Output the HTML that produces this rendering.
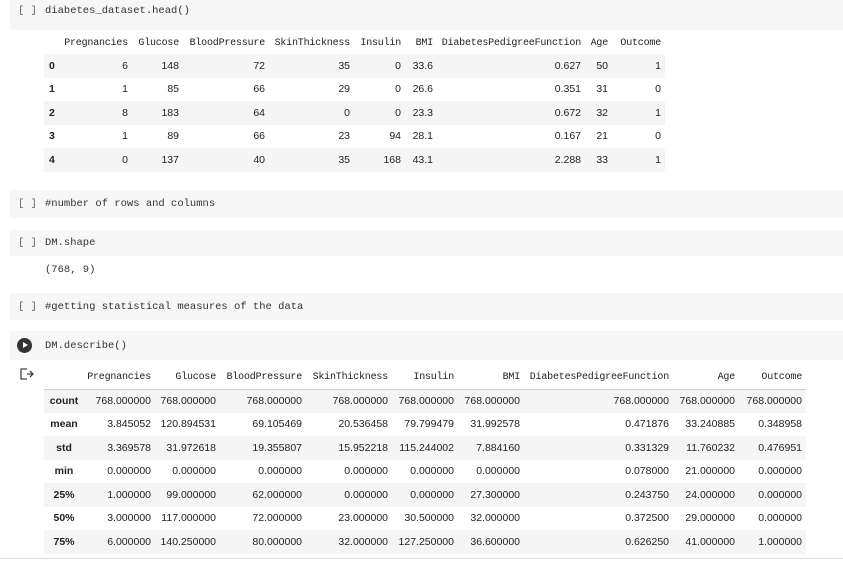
<!DOCTYPE html>
<html><head><meta charset="utf-8"><style>
body{margin:0;width:843px;height:567px;background:#fff;position:relative;overflow:hidden;font-family:"Liberation Sans",Arial,sans-serif;}
.cell{position:absolute;left:10px;right:0;background:#f7f7f7;}
.code{position:absolute;font-family:"Liberation Mono",monospace;font-size:10.5px;color:#333;white-space:pre;}
.br{position:absolute;left:18px;font-family:"Liberation Mono",monospace;font-size:10.5px;color:#666;}
table{position:absolute;border-collapse:collapse;table-layout:fixed;font-size:10.5px;color:#222;}
td,th{padding:0 4px 0 0;text-align:right;white-space:nowrap;overflow:hidden;}
th{font-family:"Liberation Mono",monospace;font-weight:normal;font-size:10px;color:#222;letter-spacing:-0.2px;}
td.i{font-weight:bold;text-align:left;padding-left:5px;}
tr.g td{background:#f5f5f5;}
#t1 tr{height:23.5px} #t1 tr.h{height:22px}
#t2 tr{height:23.5px} #t2 tr.h{height:22px} #t2 tr.h th{border-bottom:1px solid #ccc}
#t2 td.i{text-align:center;padding:0}
</style></head><body>
<div class="cell" style="top:0;height:30px"></div>
<span class="br" style="top:5px">[ ]</span><span class="code" style="left:45px;top:5px">diabetes_dataset.head()</span>

<table id="t1" style="left:44px;top:32px;width:621px">
<colgroup><col style="width:16px"><col style="width:72px"><col style="width:51px"><col style="width:86px"><col style="width:85px"><col style="width:51px"><col style="width:32px"><col style="width:148px"><col style="width:27px"><col style="width:53px"></colgroup>
<tr class="h"><th></th><th>Pregnancies</th><th>Glucose</th><th>BloodPressure</th><th>SkinThickness</th><th>Insulin</th><th>BMI</th><th>DiabetesPedigreeFunction</th><th>Age</th><th>Outcome</th></tr>
<tr class="g"><td class="i">0</td><td>6</td><td>148</td><td>72</td><td>35</td><td>0</td><td>33.6</td><td>0.627</td><td>50</td><td>1</td></tr>
<tr><td class="i">1</td><td>1</td><td>85</td><td>66</td><td>29</td><td>0</td><td>26.6</td><td>0.351</td><td>31</td><td>0</td></tr>
<tr class="g"><td class="i">2</td><td>8</td><td>183</td><td>64</td><td>0</td><td>0</td><td>23.3</td><td>0.672</td><td>32</td><td>1</td></tr>
<tr><td class="i">3</td><td>1</td><td>89</td><td>66</td><td>23</td><td>94</td><td>28.1</td><td>0.167</td><td>21</td><td>0</td></tr>
<tr class="g"><td class="i">4</td><td>0</td><td>137</td><td>40</td><td>35</td><td>168</td><td>43.1</td><td>2.288</td><td>33</td><td>1</td></tr>
</table>

<div class="cell" style="top:190px;height:28px"></div>
<span class="br" style="top:198px">[ ]</span><span class="code" style="left:45px;top:198px">#number of rows and columns</span>

<div class="cell" style="top:230px;height:26px"></div>
<span class="br" style="top:237px">[ ]</span><span class="code" style="left:45px;top:237px">DM.shape</span>
<span class="code" style="left:45px;top:264px">(768, 9)</span>

<div class="cell" style="top:293px;height:27px"></div>
<span class="br" style="top:301px">[ ]</span><span class="code" style="left:45px;top:301px">#getting statistical measures of the data</span>

<div class="cell" style="top:331px;height:29px"></div>
<div style="position:absolute;left:17px;top:338px;width:15px;height:15px;border-radius:50%;background:#333"></div>
<div style="position:absolute;left:23px;top:342px;width:0;height:0;border-left:5px solid #fff;border-top:3.5px solid transparent;border-bottom:3.5px solid transparent"></div>
<span class="code" style="left:45px;top:340px">DM.describe()</span>
<svg style="position:absolute;left:20px;top:368px" width="14" height="12" viewBox="0 0 14 12"><path d="M6 1H1v10h5M6 1h1M6 11h1M7 6h6M10 3l3 3-3 3" fill="none" stroke="#444" stroke-width="1.3"/></svg>

<table id="t2" style="left:44px;top:367px;width:762px">
<colgroup><col style="width:40px"><col style="width:71px"><col style="width:65px"><col style="width:86px"><col style="width:86px"><col style="width:66px"><col style="width:66px"><col style="width:149px"><col style="width:66px"><col style="width:67px"></colgroup>
<tr class="h"><th></th><th>Pregnancies</th><th>Glucose</th><th>BloodPressure</th><th>SkinThickness</th><th>Insulin</th><th>BMI</th><th>DiabetesPedigreeFunction</th><th>Age</th><th>Outcome</th></tr>
<tr class="g"><td class="i">count</td><td>768.000000</td><td>768.000000</td><td>768.000000</td><td>768.000000</td><td>768.000000</td><td>768.000000</td><td>768.000000</td><td>768.000000</td><td>768.000000</td></tr>
<tr><td class="i">mean</td><td>3.845052</td><td>120.894531</td><td>69.105469</td><td>20.536458</td><td>79.799479</td><td>31.992578</td><td>0.471876</td><td>33.240885</td><td>0.348958</td></tr>
<tr class="g"><td class="i">std</td><td>3.369578</td><td>31.972618</td><td>19.355807</td><td>15.952218</td><td>115.244002</td><td>7.884160</td><td>0.331329</td><td>11.760232</td><td>0.476951</td></tr>
<tr><td class="i">min</td><td>0.000000</td><td>0.000000</td><td>0.000000</td><td>0.000000</td><td>0.000000</td><td>0.000000</td><td>0.078000</td><td>21.000000</td><td>0.000000</td></tr>
<tr class="g"><td class="i">25%</td><td>1.000000</td><td>99.000000</td><td>62.000000</td><td>0.000000</td><td>0.000000</td><td>27.300000</td><td>0.243750</td><td>24.000000</td><td>0.000000</td></tr>
<tr><td class="i">50%</td><td>3.000000</td><td>117.000000</td><td>72.000000</td><td>23.000000</td><td>30.500000</td><td>32.000000</td><td>0.372500</td><td>29.000000</td><td>0.000000</td></tr>
<tr class="g"><td class="i">75%</td><td>6.000000</td><td>140.250000</td><td>80.000000</td><td>32.000000</td><td>127.250000</td><td>36.600000</td><td>0.626250</td><td>41.000000</td><td>1.000000</td></tr>
</table>
<div style="position:absolute;left:0;right:0;top:558px;height:1px;background:#ddd"></div>
</body></html>
